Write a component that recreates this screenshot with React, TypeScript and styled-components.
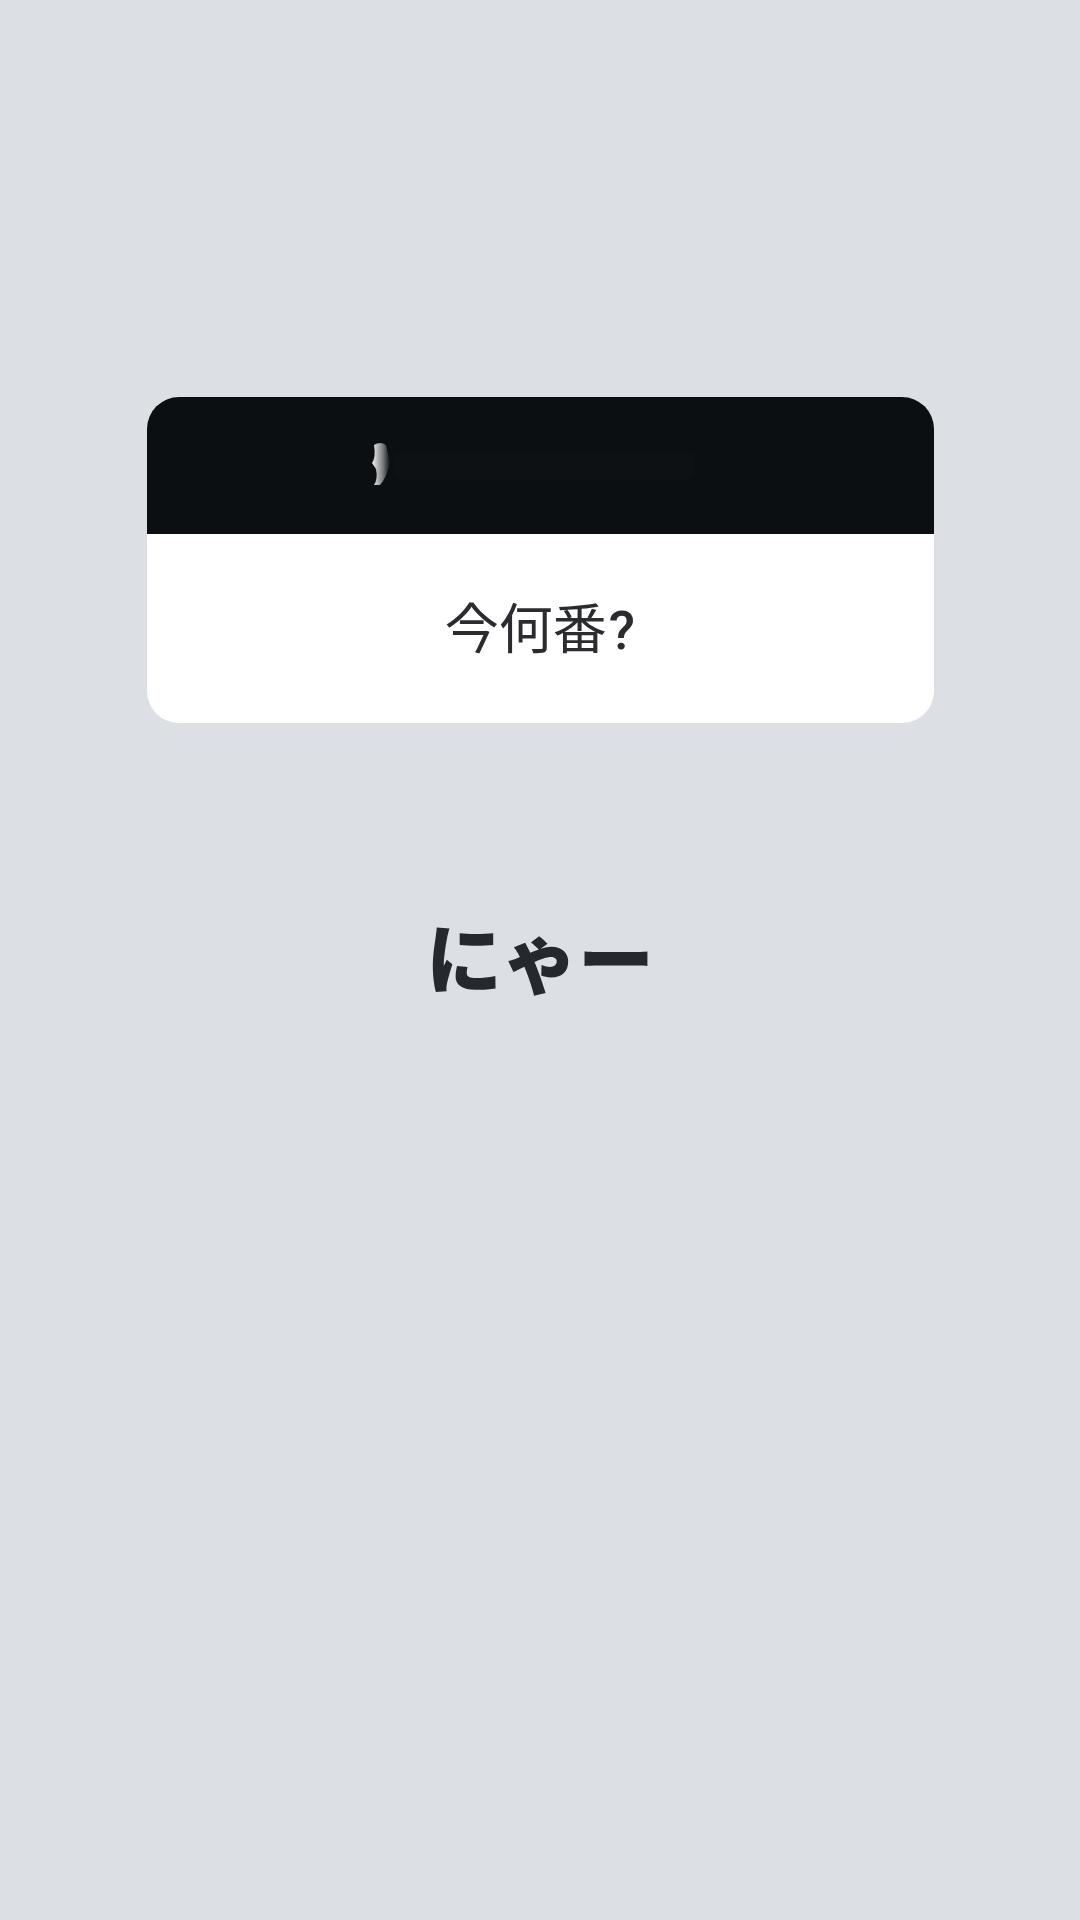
import React from 'react';
import styled, { createGlobalStyle } from 'styled-components';

const GlobalStyle = createGlobalStyle`
  html, body {
    margin: 0;
    padding: 0;
    background: #dcdfe4;
  }
  body {
    font-family: Roboto, "Noto Sans CJK JP", "Noto Sans", sans-serif;
    color: #27292e;
  }
`;

const Page = styled.main`
  min-height: 1920px;
  display: flex;
  flex-direction: column;
  align-items: center;
  padding-top: 397px;
  box-sizing: border-box;
`;

const Card = styled.section`
  width: 787px;
  border-radius: 32px;
  overflow: hidden;
  background: #ffffff;
  display: flex;
  flex-direction: column;
`;

const Banner = styled.div`
  height: 137px;
  background: #0c0f12;
  display: flex;
  justify-content: center;
  padding-top: 42px;
  box-sizing: border-box;
`;

const Question = styled.div`
  height: 189px;
  display: flex;
  align-items: center;
  justify-content: center;
  font-size: 54px;
  line-height: 1;
  color: #2a2c30;
  padding-top: 4px;
  box-sizing: border-box;
`;

const Mark = styled.span`
  font-weight: 500;
  margin-left: 2px;
`;

const Answer = styled.h1`
  margin: 194px 0 0;
  font-family: "Noto Sans CJK JP", sans-serif;
  font-size: 76px;
  font-weight: 900;
  line-height: 1;
  color: #25282d;
`;

function BannerArt() {
  return (
    <svg width="340" height="60" viewBox="0 0 340 60">
      <defs>
        <linearGradient id="glint" x1="0" x2="1" y1="0" y2="0">
          <stop offset="0" stopColor="#f2f2f2" />
          <stop offset="0.6" stopColor="#7a7c7e" />
          <stop offset="1" stopColor="#0c0f12" />
        </linearGradient>
      </defs>
      <path d="M4 6 Q10 2 16 6 L20 24 Q16 40 10 46 L4 46 Q8 40 6 30 L2 24 Q6 18 4 6 Z" fill="url(#glint)" />
      <rect x="24" y="14" width="300" height="26" rx="4" fill="#0e1114" />
    </svg>
  );
}

export default function App() {
  return (
    <>
      <GlobalStyle />
      <Page>
        <Card>
          <Banner>
            <BannerArt />
          </Banner>
          <Question>
            今何番<Mark>?</Mark>
          </Question>
        </Card>
        <Answer>にゃー</Answer>
      </Page>
    </>
  );
}
